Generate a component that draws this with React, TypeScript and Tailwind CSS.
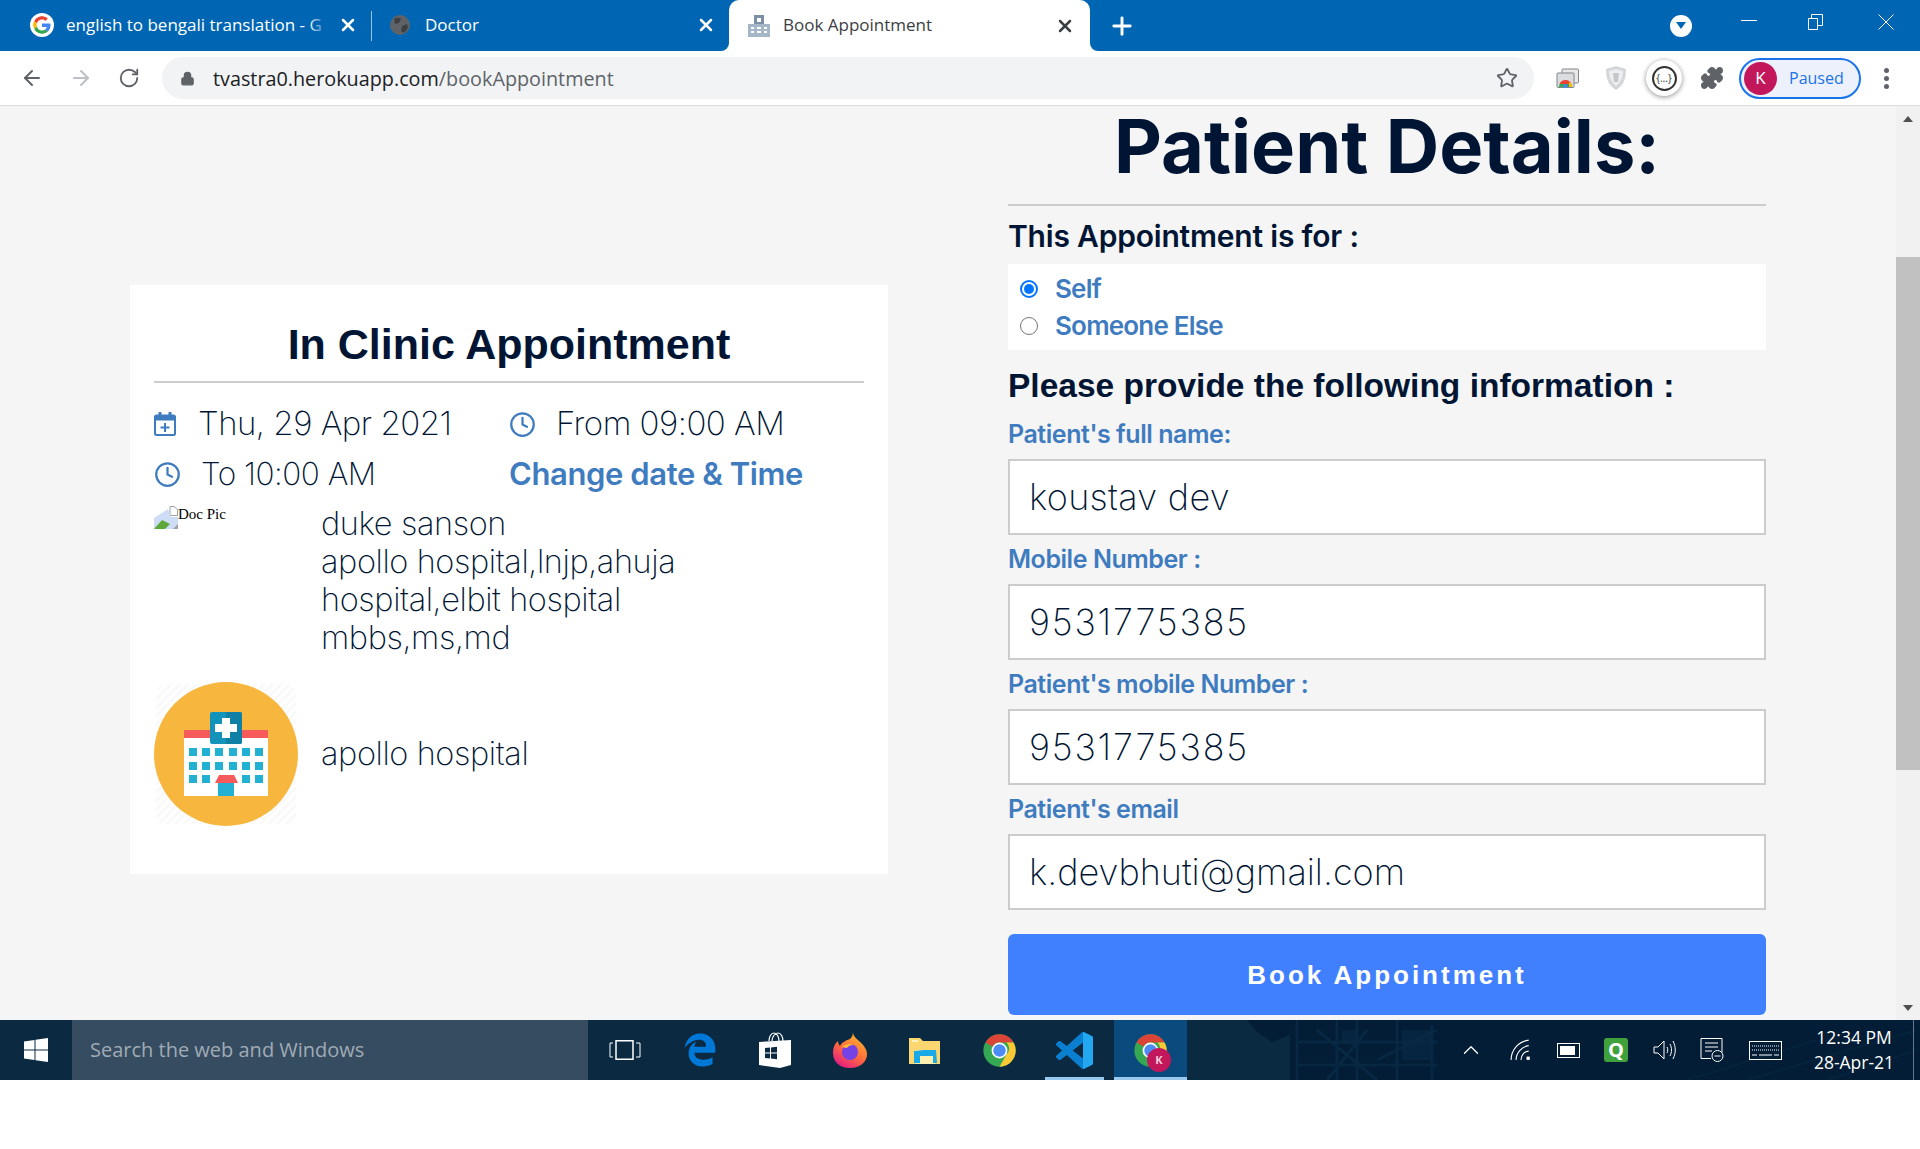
import type { ReactNode } from "react";
import { ArrowLeft, ArrowRight, RotateCw, Lock, Star, Puzzle, Plus, X, Clock, ChevronUp } from "lucide-react";
import { FaEdgeLegacy } from "react-icons/fa6";

const sans = "font-['Inter',sans-serif]";

function GoogleG() {
  return (
    <svg viewBox="0 0 48 48" className="w-[24px] h-[24px] rounded-full bg-white p-[3px] shrink-0">
      <path fill="#EA4335" d="M24 9.5c3.5 0 6.7 1.3 9.1 3.5l6.8-6.8C35.8 2.4 30.2 0 24 0 14.6 0 6.5 5.4 2.6 13.2l7.9 6.2C12.4 13.7 17.7 9.5 24 9.5z" />
      <path fill="#4285F4" d="M46.9 24.5c0-1.6-.1-3.1-.4-4.5H24v9h12.9c-.6 3-2.3 5.5-4.8 7.2l7.7 6c4.5-4.2 7.1-10.3 7.1-17.7z" />
      <path fill="#FBBC05" d="M10.5 28.6c-.5-1.4-.8-3-.8-4.6s.3-3.2.8-4.6l-7.9-6.2C1 16.5 0 20.1 0 24s1 7.5 2.6 10.8l7.9-6.2z" />
      <path fill="#34A853" d="M24 48c6.5 0 11.9-2.1 15.9-5.8l-7.7-6c-2.2 1.5-5 2.3-8.2 2.3-6.3 0-11.6-4.2-13.5-9.9l-7.9 6.2C6.5 42.6 14.6 48 24 48z" />
    </svg>
  );
}

function ChromeLogo({ size = 32 }: { size?: number }) {
  return (
    <svg viewBox="0 0 48 48" width={size} height={size} className="shrink-0">
      <circle cx="24" cy="24" r="23.5" fill="#34A853" />
      <path fill="#DB4437" d="M24 .5a23.5 23.5 0 0 1 20.4 11.8H24a11.7 11.7 0 0 0-10.2 5.9L3.7 12.4A23.5 23.5 0 0 1 24 .5z" />
      <path fill="#FCC934" d="M44.4 12.3A23.5 23.5 0 0 1 24 47.5l10.2-17.6a11.7 11.7 0 0 0-.1-17.6z" />
      <circle cx="24" cy="24" r="11.5" fill="#fff" />
      <circle cx="24" cy="24" r="9" fill="#4b8bf5" />
    </svg>
  );
}

function HospitalPic() {
  return (
    <svg viewBox="0 0 144 144" className="w-[144px] h-[144px] shrink-0">
      <defs>
        <pattern id="hatch" width="6" height="6" patternUnits="userSpaceOnUse" patternTransform="rotate(45)">
          <rect width="6" height="6" fill="#fff" />
          <rect width="3" height="6" fill="#f9f9f9" />
        </pattern>
      </defs>
      <rect x="2" y="2" width="140" height="140" rx="10" fill="url(#hatch)" />
      <circle cx="72" cy="72" r="72" fill="#f7b73f" />
      <rect x="30" y="48" width="84" height="66" fill="#fff" />
      <rect x="30" y="48" width="84" height="8" fill="#f65a5b" />
      <rect x="56" y="30" width="32" height="32" rx="2" fill="#1393ba" />
      <path d="M72 30h14a2 2 0 0 1 2 2v28a2 2 0 0 1-2 2H72z" fill="#0e80a5" />
      <path d="M68 36h8v6h7v8h-7v6h-8v-6h-7v-8h7z" fill="#fff" />
      {[66, 80, 93].map((y) =>
        [35, 48, 61, 75, 88, 101].map((x) =>
          y === 93 && (x === 61 || x === 75) ? null : (
            <rect key={`${x}-${y}`} x={x} y={y} width="8" height="8" fill="#22b0d3" />
          ),
        ),
      )}
      <path d="M61 101l4-8h15l4 8z" fill="#f65a5b" />
      <rect x="64" y="101" width="16" height="13" fill="#22b0d3" />
    </svg>
  );
}

function BrokenImage() {
  return (
    <svg viewBox="0 0 24 23" className="w-[24px] h-[23px] shrink-0">
      <path d="M16 .5h4l3.500 3v6h-7.500z" fill="#fff" stroke="#9aa0a6" />
      <path d="M0 12l14-9 3 8 7 0v12H0z" fill="#cfdcf5" />
      <path d="M0 23l8-9 8 4-5 5z" fill="#5da83a" />
      <path d="M19 23l5-5v5z" fill="#9aa0a6" />
    </svg>
  );
}

function CalendarIcon() {
  return (
    <svg viewBox="0 0 22 24" className="w-[22px] h-[24px] mr-[22px] shrink-0" fill="none" stroke="#3f7cbf" strokeWidth="2">
      <rect x="1" y="3.500" width="20" height="19.500" rx="1.500" />
      <path d="M1 5h20v2.500H1z" fill="#3f7cbf" />
      <path d="M6 0v4M16 0v4" strokeWidth="3" />
      <path d="M11 11v9M6.500 15.500h9" />
    </svg>
  );
}

function Field({ label, value, valueClass }: { label: string; value: string; valueClass: string }) {
  return (
    <div className="flex flex-col">
      <label className={`text-[25px] leading-[30px] font-semibold tracking-[-0.45px] text-[#3f7cbf] ${sans}`}>{label}</label>
      <div className={`mt-[10px] h-[76px] border-2 border-[#ccc] bg-white flex items-center pl-[19px] text-[36px] font-extralight text-[#001533] ${sans} ${valueClass}`}>
        {value}
      </div>
    </div>
  );
}

function TaskIcon({ children, open }: { children: ReactNode; open?: boolean }) {
  return (
    <div className="relative w-[75px] h-[60px] flex items-center justify-center shrink-0">
      {children}
      {open && <div className="absolute bottom-0 inset-x-[8px] h-[3px] bg-[#99c9ee]" />}
    </div>
  );
}

export default function App() {
  return (
    <div className="w-[1920px] h-[1149px] bg-white overflow-hidden flex flex-col font-['Open_Sans',sans-serif]">
      {/* tab strip */}
      <div className="h-[51px] bg-[#0066b3] flex items-center shrink-0 text-white">
        <div className="w-[371px] pl-[30px] flex items-center text-[17px] -mt-[1px] shrink-0">
          <GoogleG />
          <span className="relative ml-[12px] w-[262px] whitespace-nowrap">
            english to bengali translation - G
            <span className="absolute right-0 top-0 bottom-0 w-[20px] bg-gradient-to-r from-transparent to-[#0066b3]" />
          </span>
          <X size={20} strokeWidth={3} className="ml-[10px] shrink-0" />
        </div>
        <div className="w-px h-[30px] bg-white/60 shrink-0" />
        <div className="w-[357px] pl-[18px] pr-[13px] flex items-center text-[17px] -mt-[1px] shrink-0">
          <svg viewBox="0 0 20 20" className="w-[20px] h-[20px] mr-[15px] shrink-0">
            <circle cx="10" cy="10" r="10" fill="#5f6368" />
            <path d="M4 4c3-2 5-1 7 0l-2 4-4 1zM12 11l5-2 1 4-4 5-3-2z" fill="#3c4043" />
          </svg>
          <span className="flex-1">Doctor</span>
          <X size={20} strokeWidth={3} />
        </div>
        <div className="relative w-[361px] h-[51px] bg-white rounded-t-[10px] flex items-center pl-[18px] pr-[15px] text-[17px] text-[#3c4043] shrink-0">
          <div className="absolute -left-[8px] bottom-0 w-[8px] h-[8px] bg-white">
            <div className="w-full h-full bg-[#0066b3] rounded-br-[8px]" />
          </div>
          <div className="absolute -right-[8px] bottom-0 w-[8px] h-[8px] bg-white">
            <div className="w-full h-full bg-[#0066b3] rounded-bl-[8px]" />
          </div>
          <svg viewBox="0 0 24 24" className="w-[24px] h-[24px] mr-[12px]" fill="#7d8fa6">
            <rect x="7" y="1" width="10" height="22" />
            <rect x="1" y="10" width="22" height="13" fill="#a6b6c9" />
            <rect x="10" y="4" width="4" height="4" fill="#fff" />
            <path d="M4 13h3v2H4zM4 17h3v2H4zM17 13h3v2h-3zM17 17h3v2h-3zM10 13h4v2h-4zM10 17h4v2h-4z" fill="#fff" />
          </svg>
          <span className="flex-1 -mt-[2px]">Book Appointment</span>
          <X size={20} strokeWidth={3} className="text-[#3c4043]" />
        </div>
        <Plus size={28} strokeWidth={2.5} className="ml-[18px]" />
        <div className="flex-1" />
        <div className="w-[22px] h-[22px] rounded-full bg-white flex items-center justify-center mr-[49px]">
          <div className="w-0 h-0 border-x-[5px] border-x-transparent border-t-[7px] border-t-[#0066b3]" />
        </div>
        <div className="w-[16px] h-px bg-white -mt-[10px] mr-[51px]" />
        <svg viewBox="0 0 15 16" className="w-[15px] h-[16px] -mt-[8px] mr-[55px]" fill="none" stroke="#fff">
          <path d="M.5 4.500h9v11h-9zM3.500 4V.5h11v11H10" />
        </svg>
        <svg viewBox="0 0 16 16" className="w-[16px] h-[16px] -mt-[8px] mr-[26px]" fill="none" stroke="#fff">
          <path d="M.5.5l15 15M15.500.5l-15 15" />
        </svg>
      </div>

      {/* toolbar */}
      <div className="h-[55px] bg-white border-b border-[#dadce0] flex items-center shrink-0 text-[#5f6368]">
        <ArrowLeft size={24} className="ml-[20px]" />
        <ArrowRight size={24} className="ml-[25px] text-[#bdc1c6]" />
        <RotateCw size={22} className="ml-[25px]" />
        <div className="ml-[22px] w-[1372px] h-[42px] rounded-full bg-[#f1f3f4] flex items-center pl-[18px] pr-[16px]">
          <Lock size={15} fill="#5f6368" className="mr-[18px]" />
          <span className="text-[19.800px] text-[#202124] mt-[1px]">tvastra0.herokuapp.com</span>
          <span className="text-[19.800px] text-[#5f6368] mt-[1px]">/bookAppointment</span>
          <div className="flex-1" />
          <Star size={22} className="text-[#5f6368]" />
        </div>
        <svg viewBox="0 0 23 20" className="ml-[22px] w-[23px] h-[20px] shrink-0">
          <rect x="6" y="1" width="16.500" height="14" rx="1" fill="#e8e8e8" stroke="#80868b" />
          <rect x="1" y="5" width="17" height="14.500" rx="1" fill="#dadce0" stroke="#80868b" />
          <path d="M3 19a6.500 6.500 0 0 1 13 0z" fill="#34a853" />
          <path d="M3.500 16a6.500 6.500 0 0 1 12 0z" fill="#ea4335" />
          <path d="M13 13.500a6.500 6.500 0 0 1 3 5.500h-3z" fill="#fbbc05" />
          <circle cx="9.500" cy="18" r="2" fill="#4285f4" />
        </svg>
        <svg viewBox="0 0 22 24" className="ml-[26px] w-[22px] h-[24px] shrink-0">
          <path d="M1 3l10-3 10 3c0 9-2 16-10 21C3 19 1 12 1 3z" fill="#d4d6d9" />
          <path d="M4 5l7-2 7 2c0 6-2 11-7 15C6 16 4 11 4 5z" fill="#eceef0" />
          <path d="M8 7h6l-1 9h-4z" fill="#c4c7ca" />
        </svg>
        <div className="ml-[19px] w-[36px] h-[36px] rounded-full bg-white shadow-[0_1px_5px_rgba(0,0,0,0.45)] flex items-center justify-center shrink-0">
          <div className="w-[25px] h-[25px] rounded-full border-2 border-[#333] flex items-center justify-center text-[10px] text-[#333] leading-none">{"{…}"}</div>
        </div>
        <Puzzle size={24} fill="#5f6368" className="ml-[18px] shrink-0" />
        <div className="ml-[15px] w-[122px] h-[41px] rounded-full border-2 border-[#1a73e8] bg-[#edf1fb] flex items-center pl-[3px] text-[#1a73e8] text-[16px] shrink-0">
          <div className="w-[33px] h-[33px] rounded-full bg-[#c2185b] text-white text-[17px] flex items-center justify-center mr-[12px]">K</div>
          Paused
        </div>
        <div className="ml-[23px] flex flex-col gap-[3px] shrink-0">
          <div className="w-[5px] h-[5px] rounded-full bg-[#5f6368]" />
          <div className="w-[5px] h-[5px] rounded-full bg-[#5f6368]" />
          <div className="w-[5px] h-[5px] rounded-full bg-[#5f6368]" />
        </div>
      </div>

      {/* page */}
      <div className="h-[914px] bg-[#f5f5f5] flex shrink-0">
        <div className="w-[1008px] pl-[130px] pt-[179px] shrink-0">
          <div className={`w-[758px] h-[589px] bg-white px-[24px] pt-[32px] text-[#001533] ${sans}`}>
            <h2 className="text-center text-[43px] leading-[55px] font-bold font-['Liberation_Sans',sans-serif] pb-[9px] border-b-2 border-[#ccc]">
              In Clinic Appointment
            </h2>
            <div className="mt-[16px] grid grid-cols-[355px_1fr] text-[33px] font-extralight tracking-[-0.5px]">
              <div className="h-[50px] flex items-center">
                <CalendarIcon />
                Thu, 29 Apr 2021
              </div>
              <div className="h-[50px] flex items-center">
                <Clock size={27} className="text-[#3f7cbf] mr-[20px]" />
                From 09:00 AM
              </div>
              <div className="h-[50px] flex items-center text-[31.500px]">
                <Clock size={27} className="text-[#3f7cbf] mr-[20px]" />
                To 10:00 AM
              </div>
              <div className="h-[50px] flex items-center text-[31px] font-semibold tracking-[-0.4px] text-[#3f7cbf]">Change date &amp; Time</div>
            </div>
            <div className="mt-[6px] flex">
              <div className="w-[167px] flex items-start font-['Liberation_Serif',serif] text-[15px] leading-[16px] shrink-0 mt-[1px] text-black">
                <BrokenImage />
                Doc Pic
              </div>
              <div className="text-[32.500px] leading-[38px] font-extralight tracking-[-0.4px]">
                <div>duke sanson</div>
                <div className="w-[400px]">apollo hospital,lnjp,ahuja hospital,elbit hospital</div>
                <div>mbbs,ms,md</div>
              </div>
            </div>
            <div className="mt-[25px] flex items-center gap-[23px]">
              <HospitalPic />
              <span className="text-[32.500px] font-extralight tracking-[-0.4px]">apollo hospital</span>
            </div>
          </div>
        </div>

        <div className={`w-[758px] shrink-0 text-[#001533] ${sans}`}>
          <h1 className="text-center text-[74px] leading-[80px] font-bold border-b-2 border-[#ccc] pb-[18px]">Patient Details:</h1>
          <div className="mt-[11px] text-[30px] leading-[38px] font-semibold tracking-[-0.2px]">This Appointment is for :</div>
          <div className="mt-[9px] h-[86px] bg-white flex flex-col justify-center pl-[12px] text-[#3f7cbf] text-[26px] leading-[37px] font-semibold tracking-[-0.8px]">
            <div className="flex items-center gap-[17px]">
              <div className="w-[18px] h-[18px] rounded-full border-2 border-[#0075ff] flex items-center justify-center">
                <div className="w-[10px] h-[10px] rounded-full bg-[#0075ff]" />
              </div>
              Self
            </div>
            <div className="flex items-center gap-[17px]">
              <div className="w-[18px] h-[18px] rounded-full border border-[#767676] bg-white" />
              Someone Else
            </div>
          </div>
          <div className="mt-[15px] text-[33.500px] leading-[42px] font-bold font-['Liberation_Sans',sans-serif]">Please provide the following information :</div>
          <div className="mt-[12px] flex flex-col gap-[9px]">
            <Field label="Patient's full name:" value="koustav dev" valueClass="tracking-[0.3px]" />
            <Field label="Mobile Number :" value="9531775385" valueClass="tracking-[1.8px]" />
            <Field label="Patient's mobile Number :" value="9531775385" valueClass="tracking-[1.8px]" />
            <Field label="Patient's email" value="k.devbhuti@gmail.com" valueClass="tracking-[0px]" />
          </div>
          <button className="mt-[24px] w-full h-[81px] pt-[2px] rounded-[6px] bg-[#4080ff] text-white text-[26px] font-bold tracking-[3px] font-['Liberation_Sans',sans-serif]">
            Book Appointment
          </button>
        </div>

        <div className="flex-1" />
        {/* scrollbar */}
        <div className="w-[24px] bg-[#f1f1f1] flex flex-col items-center shrink-0">
          <div className="h-[25px] flex items-center">
            <div className="w-0 h-0 border-x-[5px] border-x-transparent border-b-[6px] border-b-[#505050]" />
          </div>
          <div className="mt-[126px] w-full h-[513px] bg-[#c1c1c1]" />
          <div className="flex-1" />
          <div className="h-[25px] flex items-center">
            <div className="w-0 h-0 border-x-[5px] border-x-transparent border-t-[6px] border-t-[#505050]" />
          </div>
        </div>
      </div>

      {/* taskbar */}
      <div className="h-[60px] bg-[#0b2a42] flex items-center shrink-0 text-white">
        <div className="w-[72px] flex justify-center shrink-0">
          <svg viewBox="0 0 24 24" className="w-[24px] h-[24px]" fill="#fff">
            <path d="M0 3.500l10.500-1.500v9.500H0zM11.500 1.800L24 0v11.500H11.500zM0 12.500h10.500V22L0 20.500zM11.500 12.500H24V24l-12.500-1.800z" />
          </svg>
        </div>
        <div className="w-[516px] h-[60px] bg-[#364c61] flex items-center pl-[18px] text-[20px] text-[#a0abb5] shrink-0">Search the web and Windows</div>
        <div className="w-[74px] flex justify-center shrink-0">
          <svg viewBox="0 0 32 20" className="w-[32px] h-[20px]" fill="none" stroke="#fff" strokeWidth="1.500">
            <rect x="7" y=".75" width="17" height="18.500" />
            <path d="M4 3H1v14h3M27 3h4v14h-4" strokeWidth="1" />
          </svg>
        </div>
        <TaskIcon>
          <FaEdgeLegacy size={34} color="#0078d7" />
        </TaskIcon>
        <TaskIcon>
          <svg viewBox="0 0 32 36" className="w-[32px] h-[36px]">
            <path d="M10 9c0-4 2-8 5-8s5 4 5 8M13 9c0-4 3-8 6-8s5 4 5 8" fill="none" stroke="#fff" strokeWidth="1.200" />
            <path d="M0 10l32-2v25l-11 3L0 33z" fill="#fff" />
            <path d="M6 16l5-.5v5H6zM12 15.400l6-.6v5.700h-6zM6 21.500h5v5l-5-.5zM12 21.500h6v5.700l-6-.6z" fill="#0b2a42" />
          </svg>
        </TaskIcon>
        <TaskIcon>
          <svg viewBox="0 0 34 36" className="w-[34px] h-[36px]">
            <defs>
              <linearGradient id="fx" x1="0.800" y1="0" x2="0.200" y2="1">
                <stop offset="0" stopColor="#ffbd2e" />
                <stop offset="0.500" stopColor="#ff7139" />
                <stop offset="1" stopColor="#e31587" />
              </linearGradient>
            </defs>
            <path d="M20 0c0 4 3 6 6 9 5 4 8 9 8 13 0 8-7 14-17 14S0 30 0 21c0-5 2-10 5-12 0 2 1 4 2 5 2-4 7-6 10-7 2-2 3-4 3-7z" fill="url(#fx)" />
            <circle cx="17" cy="20" r="8" fill="#7542e5" />
            <path d="M9 15c3-3 8-4 12-2-4 0-6 1-7 3z" fill="#ffbd2e" />
          </svg>
        </TaskIcon>
        <TaskIcon>
          <svg viewBox="0 0 32 27" className="w-[32px] h-[27px]">
            <path d="M0 1h11l3 3h17v23H0z" fill="#fcd671" />
            <path d="M3 3h6v2H3z" fill="#fff3c4" />
            <path d="M6 13h20v14H6z" fill="#fff0b0" />
            <path d="M5 14l10-1h12l1 13h-4v-7H11v7H5z" fill="#18a9e6" />
          </svg>
        </TaskIcon>
        <TaskIcon>
          <ChromeLogo size={33} />
        </TaskIcon>
        <TaskIcon open>
          <svg viewBox="0 0 24 24" className="w-[37px] h-[37px]">
            <path fill="#0a7fcf" d="M23.150 2.587L18.210.21a1.494 1.494 0 0 0-1.705.29l-9.460 8.630-4.120-3.128a.999.999 0 0 0-1.276.057L.327 7.261A1 1 0 0 0 .326 8.740L3.899 12 .326 15.260a1 1 0 0 0 .001 1.479L1.650 17.940a.999.999 0 0 0 1.276.057l4.120-3.128 9.460 8.630a1.492 1.492 0 0 0 1.704.29l4.942-2.377A1.500 1.500 0 0 0 24 20.060V3.939a1.500 1.500 0 0 0-.85-1.352zm-5.146 14.861L10.826 12l7.178-5.448v10.896z" />
            <path fill="#22a7f0" d="M17.500.05l.7.160 4.950 2.377A1.500 1.500 0 0 1 24 3.939V20.060a1.500 1.500 0 0 1-.85 1.353l-4.940 2.377-.7.160V.05z" />
          </svg>
        </TaskIcon>
        <div className="relative ml-[2px] w-[73px] h-[60px] bg-[#0a4a7c] flex items-center justify-center shrink-0">
          <ChromeLogo size={33} />
          <div className="absolute left-[33px] top-[28px] w-[24px] h-[24px] rounded-full bg-[#c2185b] text-[11px] font-bold flex items-center justify-center text-[#f5c6d8]">K</div>
          <div className="absolute bottom-0 inset-x-0 h-[3px] bg-[#99c9ee]" />
        </div>

        <div className="relative flex-1 h-[60px] bg-[#021d35] flex items-center pl-[271px]">
          {/* desktop wallpaper showing through the taskbar */}
          <svg viewBox="0 0 733 60" className="absolute inset-0 w-full h-full" fill="none" stroke="#0a2c48" strokeWidth="3">
            <path d="M0 0h103v60H0z" fill="#0a2a42" stroke="none" />
            <path d="M60 0h45v14l-20 8-15-10z" fill="#021d35" stroke="none" />
            <path d="M110 0v60M130 10l60 50M150 0v60M170 0v60M190 40l60-30M210 0v60M245 5v55M110 22h140M110 45h140M180 10l-40 50" opacity="0.7" />
            <path d="M215 10h30v30h-30zM155 10h15v14h-15z" fill="#0a2c48" stroke="none" opacity="0.6" />
            <path d="M500 60l130-40M560 60l170-50M640 60l90-30" opacity="0.4" strokeWidth="2" />
          </svg>
          <ChevronUp size={26} strokeWidth={1.200} className="relative shrink-0" />
          <svg viewBox="0 0 20 20" className="relative ml-[26px] w-[22px] h-[22px] shrink-0" fill="none" stroke="#fff">
            <path d="M1 19C1 10 8 2 17 1M5.500 19c0-6 5-12 11.500-13M10 19c0-4 3-8 7-8" />
            <rect x="15" y="16" width="3" height="3" fill="#fff" stroke="none" />
          </svg>
          <div className="relative ml-[25px] w-[23px] h-[15px] border border-white p-[2px] shrink-0">
            <div className="w-[15px] h-full bg-white" />
          </div>
          <div className="relative ml-[24px] w-[24px] h-[24px] rounded-[3px] bg-[#3fa13c] flex items-center justify-center font-bold text-[20px] shrink-0">Q</div>
          <svg viewBox="0 0 24 24" className="relative ml-[25px] w-[24px] h-[24px] shrink-0" fill="none" stroke="#fff">
            <path d="M1 9h4l6-6v18l-6-6H1zM14 9c1 2 1 4 0 6M17 6c2 4 2 8 0 12M20 3c3 6 3 12 0 18" />
          </svg>
          <svg viewBox="0 0 24 24" className="relative ml-[23px] w-[24px] h-[24px] shrink-0" fill="none" stroke="#fff">
            <path d="M1 .5h21v14M1 .5v20h10M5 5h13M5 9h13M5 13h7" />
            <circle cx="17.500" cy="18" r="5.500" fill="#021d35" />
            <path d="M14.500 18h6" />
          </svg>
          <svg viewBox="0 0 33 19" className="relative ml-[25px] w-[33px] h-[19px] shrink-0" fill="none" stroke="#fff">
            <rect x=".5" y=".5" width="32" height="18" />
            <path d="M3 5h27M3 9h27" strokeDasharray="1 1" />
            <path d="M3 14h5M10 14h13M25 14h5" />
          </svg>
          <div className="relative ml-[29px] w-[86px] text-[17.500px] leading-[25px] text-center shrink-0">
            <div>12:34 PM</div>
            <div>28-Apr-21</div>
          </div>
          <div className="relative ml-[16px] w-px h-full bg-white/40 shrink-0" />
        </div>
      </div>
    </div>
  );
}
